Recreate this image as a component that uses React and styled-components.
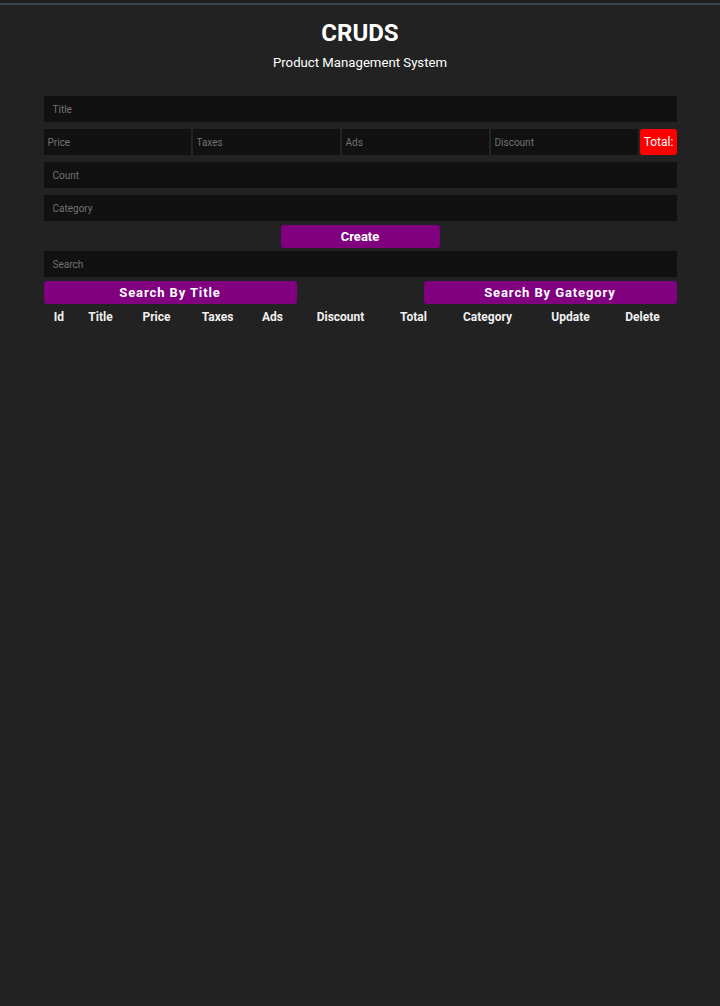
import React from "react";
import styled, { createGlobalStyle } from "styled-components";

const Global = createGlobalStyle`
  html, body { margin: 0; padding: 0; background: #222222; }
  body { font-family: Roboto, "Noto Sans", Arial, sans-serif; color: #fff; min-height: 1006px; }
  * { box-sizing: border-box; }
`;

const TopLine = styled.div`
  height: 5px;
  background: #1d1e20;
  border-bottom: 2px solid #3b444b;
`;

const Page = styled.div`
  width: 633px;
  margin: 0 auto;
  display: flex;
  flex-direction: column;
  align-items: stretch;
`;

const Head = styled.header`
  text-align: center;
  padding-top: 13px;
`;

const Title = styled.h1`
  margin: 0;
  font-size: 24px;
  line-height: 30px;
  font-weight: 700;
`;

const Sub = styled.p`
  margin: 7px 0 0;
  font-size: 13.2px;
  line-height: 16px;
`;

const Form = styled.div`
  margin-top: 25px;
  display: flex;
  flex-direction: column;
  gap: 7px;
`;

const Field = styled.input`
  width: 100%;
  height: 26px;
  border: none;
  outline: none;
  background: #111111;
  color: #fff;
  font-family: inherit;
  font-size: 10px;
  padding: 0 9px;
  border-radius: 0;
  &::placeholder { color: #727272; }
`;

const PriceRow = styled.div`
  display: flex;
  height: 26px;
`;

const PriceField = styled(Field)`
  flex: 0 0 149px;
  width: 149px;
  padding: 0 4px;
  border-right: 2px solid #242424;
`;

const Total = styled.small`
  flex: 1;
  background: #ff0000;
  border-radius: 3px;
  font-size: 12px;
  display: flex;
  align-items: center;
  justify-content: center;
  color: #fff;
  padding-left: 1px;
`;

const PurpleBtn = styled.button`
  border: none;
  background: #800080;
  color: #fff;
  border-radius: 3px;
  font-family: inherit;
  font-weight: 700;
  font-size: 13px;
  height: 23px;
  padding: 0;
  letter-spacing: ${(p) => (p.$spaced ? "0.9px" : "0")};
  cursor: pointer;
`;

const CreateBtn = styled(PurpleBtn)`
  width: 159px;
  align-self: center;
  margin: -3px 0 0;
`;

const SearchInput = styled(Field)`
  margin-top: 3px;
`;

const SearchRow = styled.div`
  display: flex;
  justify-content: space-between;
  margin-top: 4px;
`;

const SearchBtn = styled(PurpleBtn)`
  width: 253px;
`;

const HeadRow = styled.div`
  display: grid;
  grid-template-columns: 31px 52px 60px 62px 48px 88px 58px 90px 76px 68px;
  margin-top: 6px;
`;

const Th = styled.div`
  text-align: center;
  font-weight: 700;
  font-size: 12px;
  line-height: 14px;
  color: #f0f0f0;
`;

const cols = ["Id", "Title", "Price", "Taxes", "Ads", "Discount", "Total", "Category", "Update", "Delete"];

export default function App() {
  return (
    <>
      <Global />
      <TopLine />
      <Page>
        <Head>
          <Title>CRUDS</Title>
          <Sub>Product Management System</Sub>
        </Head>
        <Form>
          <Field placeholder="Title" />
          <PriceRow>
            <PriceField placeholder="Price" />
            <PriceField placeholder="Taxes" />
            <PriceField placeholder="Ads" />
            <PriceField placeholder="Discount" />
            <Total>Total:</Total>
          </PriceRow>
          <Field placeholder="Count" />
          <Field placeholder="Category" />
          <CreateBtn>Create</CreateBtn>
        </Form>
        <SearchInput placeholder="Search" />
        <SearchRow>
          <SearchBtn $spaced>Search By Title</SearchBtn>
          <SearchBtn $spaced>Search By Gategory</SearchBtn>
        </SearchRow>
        <HeadRow>
          {cols.map((c) => (
            <Th key={c}>{c}</Th>
          ))}
        </HeadRow>
      </Page>
    </>
  );
}
